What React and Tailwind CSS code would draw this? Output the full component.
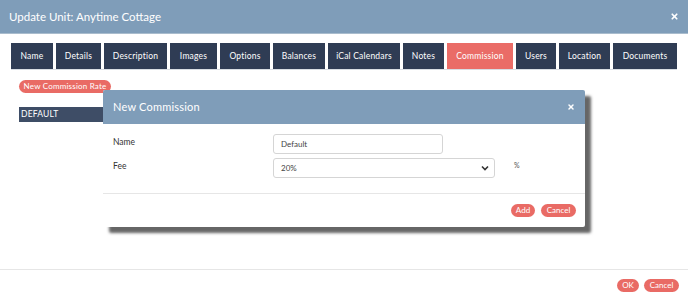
import { X } from 'lucide-react';

const tabs = [
  { label: 'Name', w: 'w-[42px]' },
  { label: 'Details', w: 'w-[45px]' },
  { label: 'Description', w: 'w-[63px]' },
  { label: 'Images', w: 'w-[47px]' },
  { label: 'Options', w: 'w-[50px]' },
  { label: 'Balances', w: 'w-[52px]' },
  { label: 'iCal Calendars', w: 'w-[72px]' },
  { label: 'Notes', w: 'w-[41px]' },
  { label: 'Commission', w: 'w-[66px]', active: true },
  { label: 'Users', w: 'w-[40px]' },
  { label: 'Location', w: 'w-[51px]' },
  { label: 'Documents', w: 'w-[64px]' },
];

function Pill({ children, className = '' }) {
  return (
    <button className={`h-[13px] whitespace-nowrap rounded-full bg-[#e96b65] text-[8px] leading-[13px] text-white ${className}`}>
      {children}
    </button>
  );
}

export default function App() {
  return (
    <div className="relative h-[301px] w-[688px] overflow-hidden bg-white font-['Lato',sans-serif]">
      {/* Header */}
      <div className="flex h-[34px] items-center justify-between border-b border-[#a9bccd] bg-[#7f9db9] pl-[9px] pr-[9px]">
        <span className="text-[11.5px] text-white">Update Unit: Anytime Cottage</span>
        <X size={9} strokeWidth={4.5} className="text-white" />
      </div>

      {/* Tabs */}
      <div className="ml-[11px] mt-[9px] flex w-[666px] gap-[3px] border-b border-[#d8dde3]">
        {tabs.map((t) => (
          <div
            key={t.label}
            className={`flex h-[26px] items-center justify-center whitespace-nowrap text-[8.5px] tracking-[0.2px] text-white ${t.w} ${
              t.active ? 'bg-[#ea6c67]' : 'bg-[#2f3c54]'
            }`}
          >
            {t.label}
          </div>
        ))}
      </div>

      {/* Commission list */}
      <div className="ml-[19px] mt-[10px]">
        <Pill className="block w-[92px] tracking-[0.2px]">New Commission Rate</Pill>
        <div className="mt-[14px] flex h-[15px] w-[100px] items-center bg-[#3e4d66] px-[2px] text-[8.5px] tracking-[0.2px] text-white">
          DEFAULT
        </div>
      </div>

      {/* Footer */}
      <div className="absolute bottom-0 left-0 right-0 flex h-[32px] justify-end gap-[5px] border-t border-[#e6e6e6] pr-[9px] pt-[9px]">
        <Pill className="w-[22px]">OK</Pill>
        <Pill className="w-[35px]">Cancel</Pill>
      </div>

      {/* New Commission dialog */}
      <div className="absolute left-[103px] top-[90px] w-[482px] rounded-[2px] bg-white shadow-[6px_6px_3px_rgba(0,0,0,0.6)]">
        <div className="flex h-[34px] items-center justify-between rounded-t-[2px] bg-[#7f9db9] pl-[10px] pr-[10px]">
          <span className="text-[11px] tracking-[0.2px] text-white">New Commission</span>
          <X size={8} strokeWidth={4.5} className="text-white" />
        </div>
        <div className="border-b border-[#e6e6e6] px-[10px] pb-[15px] pt-[10px]">
          <div className="flex items-start">
            <span className="mt-[2px] w-[160px] text-[8.5px] text-[#333]">Name</span>
            <div className="flex h-[20px] w-[170px] items-center rounded-[3px] border border-[#d5d5d5] px-[7px] text-[8px] text-[#444]">
              Default
            </div>
          </div>
          <div className="mt-[4px] flex items-start">
            <span className="mt-[2px] w-[160px] text-[8.5px] text-[#333]">Fee</span>
            <div className="flex h-[20px] w-[222px] items-center justify-between rounded-[3px] border border-[#d5d5d5] pl-[7px] pr-[5px] text-[8px] text-[#444]">
              20%
              <svg width="8" height="6" viewBox="0 0 8 6">
                <path d="M1 1.5 L4 4.5 L7 1.5" fill="none" stroke="#333" strokeWidth="1.6" />
              </svg>
            </div>
            <span className="ml-[19px] mt-[2px] text-[7px] text-[#555]">%</span>
          </div>
        </div>
        <div className="flex h-[33px] items-center justify-end gap-[6px] pr-[9px]">
          <Pill className="w-[24px]">Add</Pill>
          <Pill className="w-[35px]">Cancel</Pill>
        </div>
      </div>
    </div>
  );
}
